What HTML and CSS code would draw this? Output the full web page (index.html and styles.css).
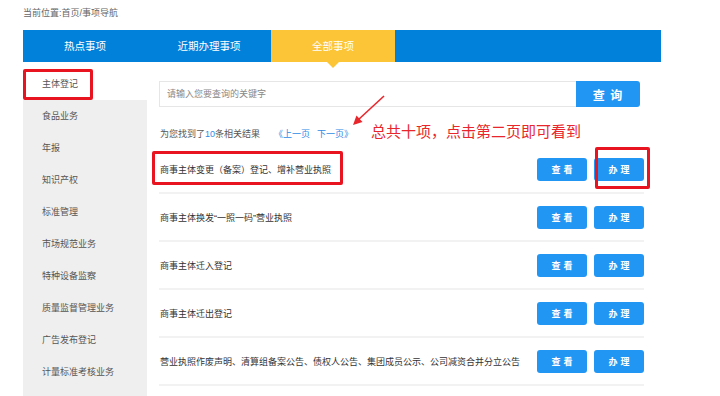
FILE: index.html
```html
<!DOCTYPE html>
<html lang="zh-CN">
<head>
    <meta charset="UTF-8">
    <meta name="viewport" content="width=device-width, initial-scale=1.0">
    <title>事项导航</title>
    <link rel="stylesheet" href="styles.css">
</head>
<body>
    <div class="crumb">当前位置:首页/事项导航</div>
    <div class="tabs">
        <div class="tab">热点事项</div>
        <div class="tab">近期办理事项</div>
        <div class="tab active">全部事项</div>
    </div>
    <div class="main">
        <ul class="side">
            <li class="side-item current">主体登记<span class="mark mark-side"></span></li>
            <li class="side-item">食品业务</li>
            <li class="side-item">年报</li>
            <li class="side-item">知识产权</li>
            <li class="side-item">标准管理</li>
            <li class="side-item">市场规范业务</li>
            <li class="side-item">特种设备监察</li>
            <li class="side-item">质量监督管理业务</li>
            <li class="side-item">广告发布登记</li>
            <li class="side-item">计量标准考核业务</li>
        </ul>
        <div class="content">
            <div class="search">
                <input type="text" placeholder="请输入您要查询的关键字">
                <button class="search-btn">查 询</button>
            </div>
            <div class="result-bar">
                <span>为您找到了<em>10</em>条相关结果</span>
                <a class="page first">《上一页</a>
                <a class="page">下一页》</a>
                <span class="note">总共十项，点击第二页即可看到</span>
            </div>
            <div class="row">
                <span class="row-title">商事主体变更（备案）登记、增补营业执照</span>
                <div class="ops"><button class="btn">查看</button><button class="btn">办理</button></div>
            </div>
            <div class="row">
                <span class="row-title">商事主体换发“一照一码”营业执照</span>
                <div class="ops"><button class="btn">查看</button><button class="btn">办理</button></div>
            </div>
            <div class="row">
                <span class="row-title">商事主体迁入登记</span>
                <div class="ops"><button class="btn">查看</button><button class="btn">办理</button></div>
            </div>
            <div class="row">
                <span class="row-title">商事主体迁出登记</span>
                <div class="ops"><button class="btn">查看</button><button class="btn">办理</button></div>
            </div>
            <div class="row">
                <span class="row-title">营业执照作废声明、清算组备案公告、债权人公告、集团成员公示、公司减资合并分立公告</span>
                <div class="ops"><button class="btn">查看</button><button class="btn">办理</button></div>
            </div>

            <!-- annotations drawn over the page -->
            <svg class="arrow" width="50" height="45" viewBox="0 0 50 45">
                <line x1="40" y1="7" x2="14" y2="31" stroke="#e8262b" stroke-width="1.6"/>
                <polygon points="9,36 18.5,33 12.5,26.5" fill="#e8262b"/>
            </svg>
            <div class="mark mark-row"></div>
            <div class="mark mark-btn"></div>
        </div>
    </div>
</body>
</html>
```

FILE: styles.css
```css
* { margin: 0; padding: 0; box-sizing: border-box; }
body { font-family: "Liberation Sans", "Noto Sans CJK SC", sans-serif; background: #fff; color: #333; width: 720px; height: 396px; overflow: hidden; }
ul { list-style: none; }
em { font-style: normal; color: #2e8ae6; }

.crumb { height: 30px; line-height: 27px; padding-left: 23px; font-size: 9px; color: #666; }

.tabs { display: flex; width: 638px; height: 32px; margin-left: 23px; background: #0281db; }
.tab { position: relative; width: 124px; line-height: 32px; text-align: center; color: #fff; font-size: 10.5px; }
.tab.active { background: #fcc537; }
.tab.active::after { content: ""; position: absolute; left: 50%; bottom: -6px; margin-left: -6px; border: 6px solid transparent; border-bottom: 0; border-top-color: #fcc537; }

.main { display: flex; margin: 7px 0 0 23px; }

.side { width: 124px; min-height: 340px; background: #efefef; }
.side-item { position: relative; height: 32px; line-height: 32px; padding-left: 19px; font-size: 9px; color: #555; }
.side-item.current { height: 31px; line-height: 31px; background: #fff; }

.content { position: relative; width: 485px; margin-left: 12px; padding-top: 12px; }

.search { display: flex; height: 26px; }
.search input { width: 417px; height: 26px; border: 1px solid #e6e6e6; border-right: 0; padding-left: 7px; font-family: inherit; font-size: 9px; color: #333; outline: none; }
.search input::placeholder { color: #888; }
.search-btn { width: 64px; height: 26px; border: none; border-radius: 0 3px 3px 0; background: #2196f3; color: #fff; font-family: inherit; font-size: 12px; font-weight: bold; letter-spacing: 1px; }

.result-bar { display: flex; align-items: center; height: 26px; margin-top: 13px; padding-left: 1px; font-size: 9px; color: #555; }
.page { color: #2e8ae6; margin-left: 7px; }
.page.first { margin-left: 14px; }
.note { margin: 0 0 6px 18px; font-size: 15px; color: #e8262b; }

.row { display: flex; align-items: center; justify-content: space-between; height: 48px; padding-left: 1px; border-bottom: 2px solid #f2f2f2; }
.row-title { font-size: 9px; color: #333; }
.ops { display: flex; gap: 7px; }
.btn { width: 50px; height: 23px; border: none; border-radius: 3px; background: #2196f3; color: #fff; font-family: inherit; font-size: 9px; font-weight: bold; letter-spacing: 3px; padding-left: 3px; }

.mark { position: absolute; border: 3px solid #e8141f; border-radius: 2px; }
.mark-side { left: 0; top: 0; width: 70px; height: 31px; }
.mark-row { left: -7px; top: 82px; width: 191px; height: 34px; }
.mark-btn { left: 436px; top: 78px; width: 55px; height: 42px; }
.arrow { position: absolute; left: 185px; top: 20px; }
```
